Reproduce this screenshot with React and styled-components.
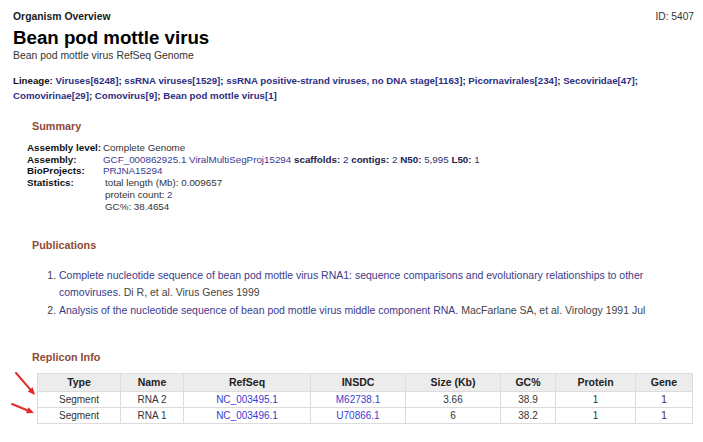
import React from 'react';
import styled, { createGlobalStyle } from 'styled-components';

const GlobalStyle = createGlobalStyle`
  body {
    margin: 0;
    background: #fff;
    color: #000;
    font-family: "Liberation Sans", Arial, Helvetica, sans-serif;
  }
  a {
    text-decoration: none;
  }
`

const Page = styled.div`
  position: relative;
  padding: 10px 9px 0 13px;
  font-size: 10.4px;
`

const TopBar = styled.div`
  display: flex;
  justify-content: space-between;
  line-height: 13px;
`

const Kicker = styled.div`
  font-weight: bold;
  color: #1a1a1a;
`

const RecordId = styled.div`
  font-size: 10.2px;
  color: #333;
`

const Title = styled.h1`
  margin: 4px 0 0;
  font-size: 18.7px;
  line-height: 22px;
  color: #000;
`

const Subtitle = styled.div`
  line-height: 13px;
  color: #333;
`

const Lineage = styled.div`
  margin-top: 12px;
  font-size: 9.7px;
  font-weight: bold;
  line-height: 14.5px;
  color: #111;
  a {
    color: #2e2e82;
  }
`

const SectionTitle = styled.div`
  margin-top: ${p => p.$gap}px;
  padding-left: 19px;
  font-size: 10.8px;
  font-weight: bold;
  line-height: 14px;
  color: #8e4a36;
`

const SummaryGrid = styled.div`
  display: grid;
  grid-template-columns: 76px 1fr;
  margin-top: 9px;
  padding-left: 14px;
  font-size: 9.8px;
  line-height: 11.7px;
  color: #333;
`

const Label = styled.div`
  font-weight: bold;
  color: #111;
`

const Value = styled.div`
  padding-left: ${p => (p.$indent ? 2 : 0)}px;
  color: ${p => (p.$dark ? '#2f2f6e' : '#333')};
  a {
    color: #3b3b94;
  }
  b {
    color: #22224a;
  }
`

const PubList = styled.ol`
  max-width: 657px;
  margin: 14.5px 0 0;
  padding-left: 46px;
  font-size: 10.5px;
  line-height: 17.5px;
  color: #444;
  a {
    color: #3a3a8c;
  }
`

const RepliconWrap = styled.div`
  margin: 9px 0 0 24px;
`

const Table = styled.table`
  border-collapse: collapse;
  width: 655px;
  table-layout: fixed;
  font-size: 10px;
  color: #333;
  border: 1px solid #dcdcdc;
`

const Th = styled.th`
  box-sizing: border-box;
  width: ${p => p.$w}px;
  padding: 2px 3px;
  line-height: 13px;
  font-size: 10.5px;
  font-weight: bold;
  color: #222;
  text-align: center;
  background: #ececec;
  border: 1px solid #dcdcdc;
`

const Td = styled.td`
  padding: 1.5px 3px;
  line-height: 12px;
  text-align: center;
  border: 1px solid #dcdcdc;
  a {
    color: #3b3bd0;
  }
`

const Arrows = styled.svg`
  position: absolute;
  left: 8px;
  top: 368px;
`

const columns = [
  ['Type', 83],
  ['Name', 63],
  ['RefSeq', 127],
  ['INSDC', 95],
  ['Size (Kb)', 95],
  ['GC%', 55],
  ['Protein', 80],
  ['Gene', 57],
];

const replicons = [
  ['Segment', 'RNA 2', 'NC_003495.1', 'M62738.1', '3.66', '38.9', '1', '1'],
  ['Segment', 'RNA 1', 'NC_003496.1', 'U70866.1', '6', '38.2', '1', '1'],
];

const lineage = [
  'Viruses[6248]',
  'ssRNA viruses[1529]',
  'ssRNA positive-strand viruses, no DNA stage[1163]',
  'Picornavirales[234]',
  'Secoviridae[47]',
  'Comovirinae[29]',
  'Comovirus[9]',
  'Bean pod mottle virus[1]',
];

function Arrow({ x1, y1, x2, y2 }) {
  const ang = Math.atan2(y2 - y1, x2 - x1);
  const len = 8;
  const spread = 0.42;
  const ax = x2 - len * Math.cos(ang - spread);
  const ay = y2 - len * Math.sin(ang - spread);
  const bx = x2 - len * Math.cos(ang + spread);
  const by = y2 - len * Math.sin(ang + spread);
  const mx = x2 - (len - 2) * Math.cos(ang);
  const my = y2 - (len - 2) * Math.sin(ang);
  return (
    <g>
      <line x1={x1} y1={y1} x2={mx} y2={my} stroke="#e52a2a" strokeWidth="2" strokeLinecap="round" />
      <polygon points={`${x2},${y2} ${ax},${ay} ${bx},${by}`} fill="#e52a2a" />
    </g>
  );
}

export default function App() {
  return (
    <>
      <GlobalStyle />
      <Page>
        <TopBar>
          <Kicker>Organism Overview</Kicker>
          <RecordId>ID: 5407</RecordId>
        </TopBar>
        <Title>Bean pod mottle virus</Title>
        <Subtitle>Bean pod mottle virus RefSeq Genome</Subtitle>

        <Lineage>
          Lineage:{' '}
          {lineage.map((item, i) => (
            <React.Fragment key={item}>
              <a href="#">{item}</a>
              {i < lineage.length - 1 ? '; ' : ''}
            </React.Fragment>
          ))}
        </Lineage>

        <SectionTitle $gap={16}>Summary</SectionTitle>
        <SummaryGrid>
          <Label>Assembly level:</Label>
          <Value>Complete Genome</Value>
          <Label>Assembly:</Label>
          <Value $dark>
            <a href="#">GCF_000862925.1 ViralMultiSegProj15294</a> <b>scaffolds:</b> 2 <b>contigs:</b> 2{' '}
            <b>N50:</b> 5,995 <b>L50:</b> 1
          </Value>
          <Label>BioProjects:</Label>
          <Value>
            <a href="#">PRJNA15294</a>
          </Value>
          <Label>Statistics:</Label>
          <Value $indent>
            total length (Mb): 0.009657
            <br />
            protein count: <a href="#">2</a>
            <br />
            GC%: 38.4654
          </Value>
        </SummaryGrid>

        <SectionTitle $gap={26}>Publications</SectionTitle>
        <PubList>
          <li>
            <a href="#">
              Complete nucleotide sequence of bean pod mottle virus RNA1: sequence comparisons and evolutionary
              relationships to other comoviruses.
            </a>{' '}
            Di R, et al. Virus Genes 1999
          </li>
          <li>
            <a href="#">Analysis of the nucleotide sequence of bean pod mottle virus middle component RNA.</a>{' '}
            MacFarlane SA, et al. Virology 1991 Jul
          </li>
        </PubList>

        <SectionTitle $gap={31}>Replicon Info</SectionTitle>
        <RepliconWrap>
          <Table>
            <thead>
              <tr>
                {columns.map(([name, w]) => (
                  <Th key={name} $w={w}>{name}</Th>
                ))}
              </tr>
            </thead>
            <tbody>
              {replicons.map(row => (
                <tr key={row[2]}>
                  {row.map((cell, i) => (
                    <Td key={i}>{i === 2 || i === 3 ? <a href="#">{cell}</a> : cell}</Td>
                  ))}
                </tr>
              ))}
            </tbody>
          </Table>
        </RepliconWrap>

        <Arrows width="32" height="52" viewBox="0 0 32 52">
          <Arrow x1={8} y1={5} x2={27} y2={27} />
          <Arrow x1={4} y1={36} x2={26} y2={45} />
        </Arrows>
      </Page>
    </>
  );
}
